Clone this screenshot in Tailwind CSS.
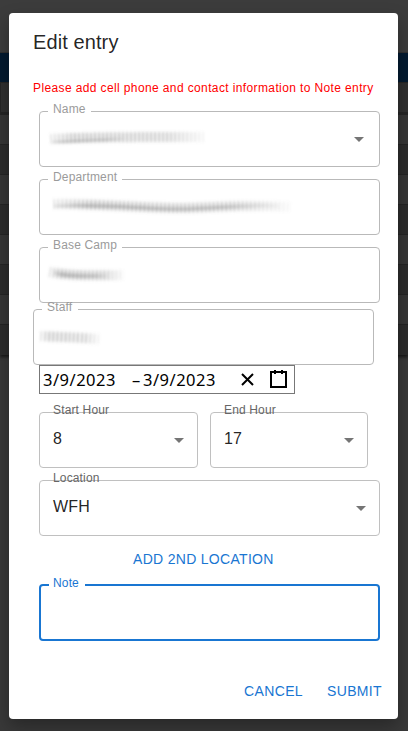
<!DOCTYPE html>
<html lang="en">
<head>
<meta charset="utf-8">
<title>Edit entry</title>
<script src="https://cdn.jsdelivr.net/npm/@tailwindcss/browser@4"></script>
</head>
<body class="relative h-[731px] w-[408px] overflow-hidden bg-[#393939] font-['Liberation_Sans',Arial,sans-serif]">
<!-- dimmed table behind the dialog -->
<div class="absolute inset-0 flex flex-col" aria-hidden="true">
  <div class="h-[52px] bg-[#3c3c3c]"></div>
  <div class="h-[30px] border-t border-[#303030] bg-[#031a30]"></div>
  <div class="h-[33px] border-t border-b-3 border-l border-[#252525] bg-[#303030]"></div>
  <div class="h-[30px] border-b border-[#252525] bg-[#363636]"></div>
  <div class="h-[30px] border-b border-[#252525] bg-[#2c2c2c]"></div>
  <div class="h-[30px] border-b border-[#252525] bg-[#363636]"></div>
  <div class="h-[30px] border-b border-[#252525] bg-[#2c2c2c]"></div>
  <div class="h-[30px] border-b border-[#252525] bg-[#363636]"></div>
  <div class="h-[30px] border-b border-[#252525] bg-[#2c2c2c]"></div>
  <div class="h-[30px] border-b border-[#252525] bg-[#363636]"></div>
  <div class="h-[30px] bg-[#2c2c2c] shadow-[0_2px_3px_#181818]"></div>
</div>

<main class="absolute top-[13px] left-[9px] flex h-[706px] w-[389px] flex-col rounded-[4px] bg-white pl-6 shadow-[0_8px_18px_rgba(0,0,0,0.3)]">
  <h1 class="mt-[13px] h-8 text-[20px] leading-8 tracking-[0.1px] text-black/87">Edit entry</h1>
  <p class="mt-[22px] h-4 whitespace-nowrap text-[12px] leading-4 tracking-[0.38px] text-[#ff0000]">Please add cell phone and contact information to Note entry</p>

  <div class="relative mt-[15px] ml-[6px] flex h-14 w-[341px] shrink-0 items-center justify-end rounded-[4px] border border-[#b9b9b9] pr-[15px]">
    <span class="absolute -top-px left-[8px] h-[2px] w-[43px] bg-white"></span>
    <label class="absolute -top-[11px] left-[13px] text-[12px] leading-4 tracking-[0.15px] text-[#9b9b9b]">Name</label>
    <svg class="absolute top-3 left-1" width="180" height="34"><defs>
      <filter id="soft" x="-20" y="-10" width="320" height="60" filterUnits="userSpaceOnUse"><feGaussianBlur stdDeviation="0.8 1.7"/></filter>
      <linearGradient id="fade"><stop offset="0" stop-color="#777" stop-opacity=".15"/><stop offset=".15" stop-color="#777" stop-opacity=".42"/><stop offset=".75" stop-color="#777" stop-opacity=".36"/><stop offset="1" stop-color="#777" stop-opacity=".05"/></linearGradient></defs>
      <g fill="none" stroke="url(#fade)" filter="url(#soft)"><path d="M6 15C45 13 100 13 162 13" stroke-width="10" stroke-dasharray="2.4 1.6"/><path d="M8 18C28 18 45 16 80 15" stroke-width="2"/></g>
    </svg>
    <svg width="10" height="5" viewBox="0 0 10 5"><path d="M0 0h10L5 5z" fill="#757575"/></svg>
  </div>

  <div class="relative mt-3 ml-[6px] h-14 w-[341px] shrink-0 rounded-[4px] border border-[#b9b9b9]">
    <span class="absolute -top-px left-[8px] h-[2px] w-[74px] bg-white"></span>
    <label class="absolute -top-[11px] left-[13px] text-[12px] leading-4 tracking-[0.15px] text-[#9b9b9b]">Department</label>
    <svg class="absolute top-3 left-1" width="260" height="34"><g fill="none" stroke="url(#fade)" filter="url(#soft)"><path d="M9 12C55 12 105 16 135 16S200 12 247 15" stroke-width="10" stroke-dasharray="2.4 1.7"/><path d="M10 14C60 12 100 17 135 17S200 12 235 14" stroke-width="3"/></g></svg>
  </div>

  <div class="relative mt-3 ml-[6px] h-14 w-[341px] shrink-0 rounded-[4px] border border-[#b9b9b9]">
    <span class="absolute -top-px left-[8px] h-[2px] w-[74px] bg-white"></span>
    <label class="absolute -top-[11px] left-[13px] text-[12px] leading-4 tracking-[0.15px] text-[#9b9b9b]">Base Camp</label>
    <svg class="absolute top-3 left-1" width="100" height="34"><g fill="none" stroke="url(#fade)" filter="url(#soft)"><path d="M5 12C20 15 42 16 80 15" stroke-width="10" stroke-dasharray="2.4 1.5"/><path d="M10 13C25 17 42 16 64 16" stroke-width="3"/></g></svg>
  </div>

  <div class="relative mt-[6px] h-14 w-[341px] shrink-0 rounded-[4px] border border-[#b9b9b9]">
    <span class="absolute -top-px left-[8px] h-[2px] w-[36px] bg-white"></span>
    <label class="absolute -top-[11px] left-[13px] text-[12px] leading-4 tracking-[0.15px] text-[#9b9b9b]">Staff</label>
    <svg class="absolute top-3 left-1" width="90" height="34"><g fill="none" stroke="url(#fade)" filter="url(#soft)"><path d="M2 14C20 15 35 15 62 17" stroke-width="10" stroke-dasharray="2.3 1.8"/></g></svg>
  </div>

  <div class="ml-[6px] flex h-[29px] w-[256px] shrink-0 items-center border border-[#777] pl-[3px] font-['Noto_Sans',sans-serif] text-[16.5px] leading-6 text-black">
    <span class="w-[89px] whitespace-nowrap tracking-[0.5px]">3/9/2023</span>
    <span class="w-[11px]">–</span>
    <span class="w-[94px] whitespace-nowrap tracking-[0.5px]">3/9/2023</span>
    <svg class="ml-px" width="19" height="19" viewBox="0 0 19 19" fill="none" stroke="#000" stroke-width="2"><path d="M4 4l11 11M15 4L4 15"/></svg>
    <svg class="ml-[12px]" width="19" height="19" viewBox="0 0 19 19" fill="none" stroke="#000" stroke-width="2"><path d="M2 2h15v15H2zM6 0v4M13 0v4"/></svg>
  </div>

  <div class="mt-[18px] ml-[6px] flex shrink-0 gap-3">
    <div class="relative flex h-14 w-[159px] items-center justify-between rounded-[4px] border border-[#c0c0c0] pr-[13px] pl-[13px]">
      <label class="absolute -top-[11px] left-[13px] text-[12px] leading-4 tracking-[0.15px] text-[#666]">Start Hour</label>
      <span class="mb-[2px] text-[16px] leading-6 tracking-[0.15px] text-black/87">8</span>
      <svg width="10" height="5" viewBox="0 0 10 5"><path d="M0 0h10L5 5z" fill="#757575"/></svg>
    </div>
    <div class="relative flex h-14 w-[158px] items-center justify-between rounded-[4px] border border-[#c0c0c0] pr-[13px] pl-[13px]">
      <label class="absolute -top-[11px] left-[13px] text-[12px] leading-4 tracking-[0.15px] text-[#666]">End Hour</label>
      <span class="mb-[2px] text-[16px] leading-6 tracking-[0.15px] text-black/87">17</span>
      <svg width="10" height="5" viewBox="0 0 10 5"><path d="M0 0h10L5 5z" fill="#757575"/></svg>
    </div>
  </div>

  <div class="relative mt-3 ml-[6px] flex h-14 w-[341px] shrink-0 items-center justify-between rounded-[4px] border border-[#c0c0c0] pr-[13px] pl-[13px]">
    <label class="absolute -top-[11px] left-[13px] text-[12px] leading-4 tracking-[0.15px] text-[#666]">Location</label>
    <span class="mb-[2px] text-[16px] leading-6 tracking-[0.15px] text-black/87">WFH</span>
    <svg width="10" height="5" viewBox="0 0 10 5"><path d="M0 0h10L5 5z" fill="#757575"/></svg>
  </div>

  <button class="mt-[11px] ml-[100px] h-6 w-[142px] shrink-0 whitespace-nowrap text-left text-[14px] leading-6 tracking-[0.3px] text-[#1976d2]">ADD 2ND LOCATION</button>

  <div class="relative mt-[13px] ml-[6px] h-[57px] w-[341px] shrink-0 rounded-[4px] border-2 border-[#1976d2]">
    <span class="absolute -top-[2px] left-[8px] h-[2px] w-[36px] bg-white"></span>
    <label class="absolute -top-[11px] left-[12px] text-[12px] leading-4 tracking-[0.15px] text-[#1976d2]">Note</label>
  </div>

  <div class="mt-[38px] mr-[16px] flex justify-end gap-6 text-[14px] leading-6 tracking-[0.35px] text-[#1976d2]">
    <button>CANCEL</button>
    <button>SUBMIT</button>
  </div>
</main>
</body>
</html>
